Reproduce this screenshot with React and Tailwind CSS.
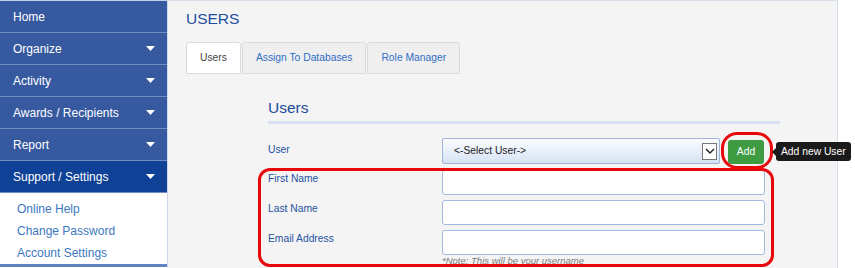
import React from "react";

const font = "font-['Liberation_Sans',Arial,Helvetica,sans-serif]";

function Caret() {
  return (
    <svg width="9" height="5" viewBox="0 0 9 5" className="shrink-0">
      <path d="M0 0 L9 0 L4.5 5 Z" fill="#ffffff" />
    </svg>
  );
}

function NavItem({ label, caret, active }) {
  return (
    <div
      className={`h-[32px] flex items-center justify-between pl-[13px] pr-[12px] border-b border-[#6f8cc3] text-white text-[12px] leading-[14px] ${
        active ? "bg-[#0f4196]" : "bg-[#36599f]"
      }`}
    >
      <span>{label}</span>
      {caret && <Caret />}
    </div>
  );
}

function Tab({ label, active }) {
  return (
    <div
      className={`h-[32px] flex items-center justify-center px-[13px] border border-[#dadada] rounded-t-[3px] text-[10.3px] ${
        active ? "bg-white text-[#444444]" : "bg-[#efefef] text-[#2f6ec8]"
      }`}
    >
      {label}
    </div>
  );
}

function Field({ label }) {
  return (
    <div className="flex">
      <div className="w-[174px] pt-[3px] text-[10.3px] leading-[12px] text-[#2452a2]">{label}</div>
      <div className="w-[323px] h-[25px] bg-white border border-[#a3badf] rounded-[3px]" />
    </div>
  );
}

export default function App() {
  return (
    <div className={`relative w-[855px] h-[268px] overflow-hidden flex bg-white ${font}`}>
      {/* Sidebar */}
      <aside className="w-[168px] shrink-0 flex flex-col border-r border-[#cdd8ea] border-t border-t-[#c3d0e6]">
        <NavItem label="Home" />
        <NavItem label="Organize" caret />
        <NavItem label="Activity" caret />
        <NavItem label="Awards / Recipients" caret />
        <NavItem label="Report" caret />
        <NavItem label="Support / Settings" caret active />
        <div className="bg-white pt-[5px] pl-[17px] border-b-[3px] border-[#5f82c2] flex flex-col">
          <span className="h-[22px] leading-[22px] text-[12px] text-[#3c78bf]">Online Help</span>
          <span className="h-[22px] leading-[22px] text-[12px] text-[#3c78bf]">Change Password</span>
          <span className="h-[22px] leading-[22px] text-[12px] text-[#3c78bf]">Account Settings</span>
        </div>
      </aside>

      {/* Main content */}
      <main className="w-[670px] shrink-0 bg-[#f4f4f4] border-t border-[#d7dfeb] border-r border-r-[#d3deee] flex flex-col pl-[18px]">
        <h1 className="mt-[9px] text-[15.5px] leading-[18px] text-[#1d4f9e]">USERS</h1>
        <div className="mt-[14px] flex gap-[1px]">
          <Tab label="Users" active />
          <Tab label="Assign To Databases" />
          <Tab label="Role Manager" />
        </div>

        <div className="ml-[82px] w-[512px] flex flex-col">
          <h2 className="mt-[25px] text-[15.5px] leading-[18px] text-[#1b4b9b]">Users</h2>
          <div className="mt-[4px] h-[3px] bg-[#d8e2f0]" />

          <div className="mt-[14px] flex">
            <div className="w-[174px] pt-[6px] text-[10.3px] leading-[12px] text-[#2452a2]">User</div>
            <div className="w-[278px] h-[26px] flex items-center justify-between pl-[11px] pr-[2px] border border-[#9fb4d8] rounded-[2px] bg-gradient-to-b from-[#fbfcff] to-[#d6e2f3] text-[10.3px] text-[#222222]">
              <span>&lt;-Select User-&gt;</span>
              <div className="w-[15px] h-[17px] bg-white border border-[#777777] flex items-center justify-center">
                <svg width="10" height="6" viewBox="0 0 10 6">
                  <path d="M1 1 L5 5 L9 1" fill="none" stroke="#222222" strokeWidth="1.4" />
                </svg>
              </div>
            </div>
            <div className="ml-[8px] mt-[2px] w-[36px] h-[24px] bg-[#3e9b41] rounded-[3px] flex items-center justify-center text-white text-[10.3px]">
              Add
            </div>
          </div>

          <div className="mt-[6px] flex flex-col gap-[5px]">
            <Field label="First Name" />
            <Field label="Last Name" />
            <Field label="Email Address" />
          </div>
          <div className="ml-[174px] mt-[1px] text-[9.5px] leading-[10px] italic text-[#7d7d7d]">
            *Note: This will be your username
          </div>
        </div>
      </main>

      {/* Annotations */}
      <div className="absolute left-[258px] top-[168px] w-[516px] h-[99px] border-[3px] border-[#e8080c] rounded-[12px]" />
      <div className="absolute left-[721px] top-[132px] w-[52px] h-[37px] border-[3px] border-[#e8080c] rounded-[16px]" />
      <div className="absolute left-[772px] top-[142px] flex items-center">
        <svg width="4" height="8" viewBox="0 0 4 8" className="shrink-0">
          <path d="M4 0 L0 4 L4 8 Z" fill="#1a1a1a" />
        </svg>
        <div className="h-[19px] px-[5px] bg-[#1a1a1a] rounded-[3px] flex items-center text-white text-[10.3px] whitespace-nowrap">
          Add new User
        </div>
      </div>
    </div>
  );
}
